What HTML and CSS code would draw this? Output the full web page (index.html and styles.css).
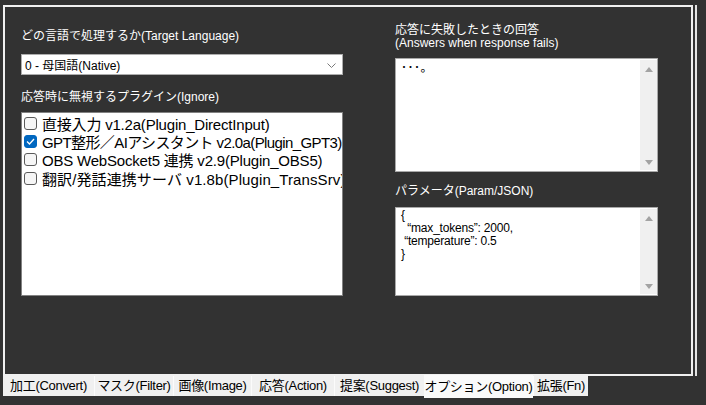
FILE: index.html
```html
<!DOCTYPE html>
<html lang="ja">
<head>
<meta charset="utf-8">
<title>Option</title>
<link rel="stylesheet" href="styles.css">
</head>
<body>
<div class="window">
  <div class="frame">
    <div class="col left">
      <div class="label">どの言語で処理するか(Target Language)</div>
      <div class="select">
        <span class="select-text">0 - 母国語(Native)</span>
        <svg class="chev" width="9" height="5" viewBox="0 0 9 5"><polyline points="0.5,0.5 4.5,4.5 8.5,0.5" fill="none" stroke="#7a7a7a" stroke-width="1"/></svg>
      </div>
      <div class="label label-ignore">応答時に無視するプラグイン(Ignore)</div>
      <div class="list">
        <div class="item"><span class="cb"></span><span class="item-text">直接入力 v1.2a(Plugin_DirectInput)</span></div>
        <div class="item"><span class="cb checked"><svg width="9" height="7" viewBox="0 0 9 7"><polyline points="1,3.5 3.5,6 8,1" fill="none" stroke="#fff" stroke-width="1.3"/></svg></span><span class="item-text tight">GPT整形／AIアシスタント v2.0a(Plugin_GPT3)</span></div>
        <div class="item"><span class="cb"></span><span class="item-text">OBS WebSocket5 連携 v2.9(Plugin_OBS5)</span></div>
        <div class="item"><span class="cb"></span><span class="item-text wide">翻訳/発話連携サーバ v1.8b(Plugin_TransSrv)</span></div>
      </div>
    </div>
    <div class="col right">
      <div class="label label-two">応答に失敗したときの回答<br>(Answers when response fails)</div>
      <div class="textbox answer">
        <div class="text dots">･･･。</div>
        <div class="sb"><span class="arrow up"></span><span class="arrow down"></span></div>
      </div>
      <div class="label label-param">パラメータ(Param/JSON)</div>
      <div class="textbox param">
        <div class="text json">{
  “max_tokens”: 2000,
 “temperature”: 0.5
}</div>
        <div class="sb"><span class="arrow up"></span><span class="arrow down"></span></div>
      </div>
    </div>
  </div>
  <div class="tabs">
    <div class="tab">加工(Convert)</div>
    <div class="tab">マスク(Filter)</div>
    <div class="tab">画像(Image)</div>
    <div class="tab">応答(Action)</div>
    <div class="tab">提案(Suggest)</div>
    <div class="tab selected">オプション(Option)</div>
    <div class="tab">拡張(Fn)</div>
  </div>
</div>
</body>
</html>
```
FILE: styles.css
```css
* { box-sizing: border-box; }
html, body {
  margin: 0;
  padding: 0;
  background: #323232;
  font-family: "Liberation Sans", "Noto Sans CJK JP", sans-serif;
}
.window {
  padding: 5px 0 0 3px;
  width: 706px;
  height: 405px;
  overflow: hidden;
}
.frame {
  width: 690px;
  height: 371px;
  border: 2px solid #f0f0f0;
  display: flex;
  box-shadow: 2px 0 0 #323232, 4px 0 0 #e4e4e4;
}
.col {
  display: flex;
  flex-direction: column;
}
.left {
  margin-left: 16px;
  width: 322px;
  padding-top: 22px;
}
.right {
  margin-left: 52px;
  width: 263px;
  padding-top: 17px;
}
.label {
  color: #fff;
  font-size: 12px;
  line-height: 14px;
  white-space: nowrap;
}
.select {
  margin-top: 11px;
  height: 21px;
  background: #fff;
  border: 1px solid #adadad;
  display: flex;
  align-items: center;
  justify-content: space-between;
  padding: 0 6px 0 3px;
}
.select-text {
  font-size: 12px;
  color: #000;
}
.chev { display: block; margin-top: 1px; }
.label-ignore { margin-top: 15px; }
.list {
  margin-top: 8px;
  height: 184px;
  background: #fff;
  border: 1px solid #828282;
  padding: 1px 0 0 2px;
  overflow: hidden;
}
.item {
  display: flex;
  align-items: center;
  height: 18.3px;
  font-size: 15px;
  color: #000;
  white-space: nowrap;
}
.item-text { letter-spacing: -0.2px; }
.item-text.tight { letter-spacing: -0.6px; }
.item-text.wide { letter-spacing: 0.1px; }
.cb {
  flex: none;
  width: 13px;
  height: 13px;
  border: 1px solid #5a5a5a;
  border-radius: 3px;
  background: #f6f6f6;
  margin-right: 5px;
  display: flex;
  align-items: center;
  justify-content: center;
}
.cb.checked {
  background: #0067c0;
  border-color: #0067c0;
}
.cb svg { display: block; }
.label-two { line-height: 13px; }
.textbox {
  background: #fff;
  border: 1px solid #a9a9a9;
  display: flex;
}
.answer { margin-top: 8px; height: 114px; }
.label-param { margin-top: 12px; }
.param { margin-top: 9px; height: 89px; }
.text {
  flex: 1;
  color: #000;
  font-size: 12px;
  padding: 1px 0 0 5px;
}
.dots {
  line-height: 13px;
  font-family: "Noto Sans CJK JP", sans-serif;
  letter-spacing: 0.5px;
}
.json {
  white-space: pre;
  line-height: 13px;
  font-size: 12px;
  letter-spacing: -0.2px;
}
.sb {
  flex: none;
  width: 17px;
  margin: 1px 0 1px 0;
  background: #f0f0f0;
  display: flex;
  flex-direction: column;
  justify-content: space-between;
  align-items: center;
  padding: 7px 0 5px;
}
.arrow {
  width: 0;
  height: 0;
  border-left: 4px solid transparent;
  border-right: 4px solid transparent;
}
.arrow.up { border-bottom: 5px solid #a3a3a3; }
.arrow.down { border-top: 5px solid #a3a3a3; }
.tabs {
  display: grid;
  grid-template-columns: 91px 79px 78px 83px 90px 109px 55px;
  align-items: start;
}
.tab {
  height: 20px;
  background: #f0f0f0;
  border-left: 1px solid #fbfbfb;
  color: #000;
  font-size: 13px;
  letter-spacing: -0.3px;
  line-height: 20px;
  text-align: center;
  white-space: nowrap;
  overflow: hidden;
}
.tab:first-child { border-left: none; }
.tab.selected {
  margin-top: -1px;
  height: 23px;
  line-height: 23px;
  background: #fafafa;
  border-left: none;
}
```
